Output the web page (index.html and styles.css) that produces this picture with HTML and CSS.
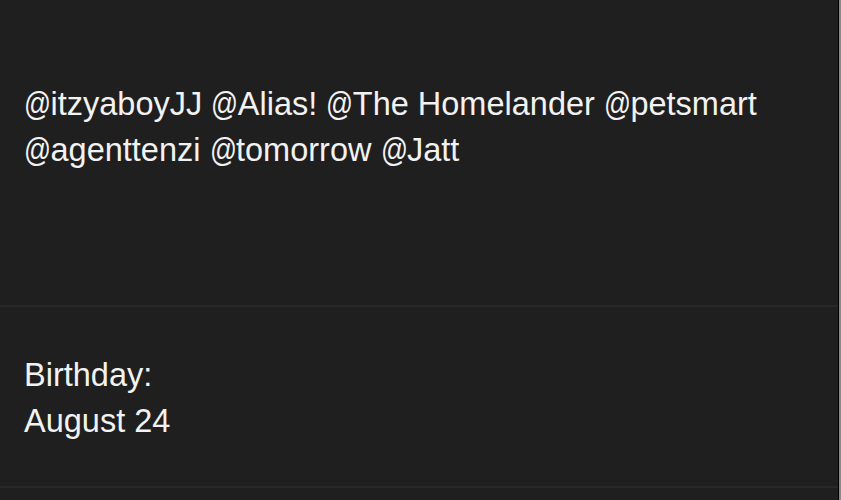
FILE: index.html
```html
<!DOCTYPE html>
<html>
<head>
<meta charset="utf-8">
<link rel="stylesheet" href="styles.css">
</head>
<body>
<div class="page">
  <section class="block mentions">
    <p class="text"><span class="mention"><span class="at">@</span>itzyaboyJJ</span> <span class="mention"><span class="at">@</span>Alias!</span> <span class="mention"><span class="at">@</span>The</span> Homelander <span class="mention"><span class="at">@</span>petsmart</span> <span class="mention"><span class="at">@</span>agenttenzi</span> <span class="mention"><span class="at">@</span>tomorrow</span> <span class="mention"><span class="at">@</span>Jatt</span></p>
  </section>
  <section class="block birthday">
    <p class="text">Birthday:<br>August 24</p>
  </section>
  <section class="block rest"></section>
</div>
<div class="edge"></div>
</body>
</html>
```
FILE: styles.css
```css
html, body {
  margin: 0;
  padding: 0;
  height: 100%;
  overflow: hidden;
}
body {
  display: flex;
  background: #1f1f1f;
  font-family: "Liberation Sans", Arial, sans-serif;
  color: #f2f2f2;
}
.page {
  width: 838px;
  display: flex;
  flex-direction: column;
}
.edge {
  width: 3px;
  border-left: 1px solid #000;
  background: #8a8a8a;
  box-sizing: border-box;
}
.block {
  padding: 0 24px;
  border-bottom: 2px solid #282828;
  box-sizing: border-box;
  flex: none;
}
.text {
  margin: 0;
  font-size: 32.5px;
  line-height: 46px;
}
.mention {
  white-space: nowrap;
}
.at {
  display: inline-block;
  transform: scaleX(0.82);
  transform-origin: left center;
  margin-right: -0.2em;
}
.mentions {
  height: 307px;
  padding-top: 81px;
}
.birthday {
  height: 181px;
  padding-top: 45px;
}
.rest {
  border-bottom: none;
  flex: 1;
}
```
